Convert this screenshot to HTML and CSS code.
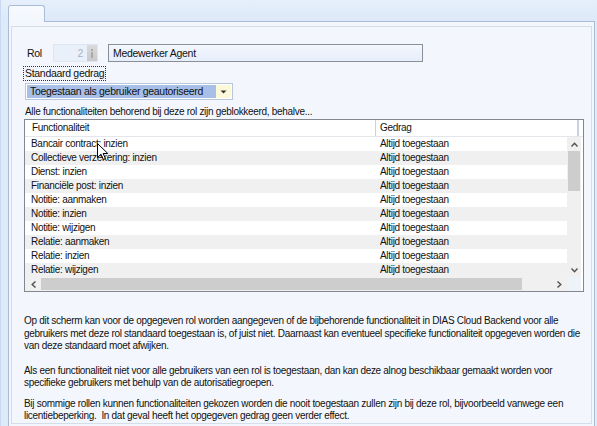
FILE: index.html
```html
<!DOCTYPE html>
<html>
<head>
<meta charset="utf-8">
<link rel="stylesheet" href="styles.css">
</head>
<body>
<div class="app">
  <div class="tabs"><div class="tab"></div></div>
  <div class="page">
    <div class="panel">
      <div class="rol-row">
        <span class="rol-label">Rol</span>
        <div class="spinner">
          <span class="spin-value">2</span>
          <span class="spin-btn"><span class="spin-mark"></span></span>
        </div>
        <div class="textbox">Medewerker Agent</div>
      </div>
      <div class="focus-label">Standaard gedrag</div>
      <div class="combo">
        <span class="combo-text">Toegestaan als gebruiker geautoriseerd</span>
        <span class="combo-btn"><svg width="7" height="4" viewBox="0 0 7 4"><path d="M0.5 0.5h6l-3 3z" fill="#333"/></svg></span>
      </div>
      <div class="caption">Alle functionaliteiten behorend bij deze rol zijn geblokkeerd, behalve...</div>
      <div class="grid">
        <div class="grid-head">
          <div class="hcell hcell-1">Functionaliteit</div>
          <div class="hcell hcell-2">Gedrag</div>
        </div>
        <div class="grid-body">
          <div class="rows">
            <div class="row"><span class="c1">Bancair contract: inzien</span><span class="c2">Altijd toegestaan</span></div>
            <div class="row alt"><span class="c1">Collectieve verzekering: inzien</span><span class="c2">Altijd toegestaan</span></div>
            <div class="row"><span class="c1">Dienst: inzien</span><span class="c2">Altijd toegestaan</span></div>
            <div class="row alt"><span class="c1">Financiële post: inzien</span><span class="c2">Altijd toegestaan</span></div>
            <div class="row"><span class="c1">Notitie: aanmaken</span><span class="c2">Altijd toegestaan</span></div>
            <div class="row alt"><span class="c1">Notitie: inzien</span><span class="c2">Altijd toegestaan</span></div>
            <div class="row"><span class="c1">Notitie: wijzigen</span><span class="c2">Altijd toegestaan</span></div>
            <div class="row alt"><span class="c1">Relatie: aanmaken</span><span class="c2">Altijd toegestaan</span></div>
            <div class="row"><span class="c1">Relatie: inzien</span><span class="c2">Altijd toegestaan</span></div>
            <div class="row alt"><span class="c1">Relatie: wijzigen</span><span class="c2">Altijd toegestaan</span></div>
          </div>
          <div class="vscroll">
            <span class="arrow"><svg width="7" height="5" viewBox="0 0 7 5"><path d="M0.5 4.5L3.5 1.2L6.5 4.5" fill="none" stroke="#505050" stroke-width="1.4"/></svg></span>
            <span class="vthumb"></span>
            <span class="vtrack"></span>
            <span class="arrow"><svg width="7" height="5" viewBox="0 0 7 5"><path d="M0.5 0.5L3.5 3.8L6.5 0.5" fill="none" stroke="#505050" stroke-width="1.4"/></svg></span>
          </div>
        </div>
        <div class="hscroll">
          <div class="htrackwrap">
            <span class="harrow"><svg width="5" height="7" viewBox="0 0 5 7"><path d="M4.5 0.5L1.2 3.5L4.5 6.5" fill="none" stroke="#505050" stroke-width="1.4"/></svg></span>
            <span class="hthumb"></span>
            <span class="htrack"></span>
            <span class="harrow"><svg width="5" height="7" viewBox="0 0 5 7"><path d="M0.5 0.5L3.8 3.5L0.5 6.5" fill="none" stroke="#505050" stroke-width="1.4"/></svg></span>
          </div>
          <span class="corner"></span>
        </div>
        <svg class="cursor" width="12" height="18" viewBox="0 0 12 18"><path d="M0.5 0.5V14.5L4 11.2L6.3 16.5L8.4 15.6L6.2 10.5H10.8Z" fill="#fff" stroke="#000" stroke-width="1"/></svg>
      </div>
      <div class="help">
        <p class="p1">Op dit scherm kan voor de opgegeven rol worden aangegeven of de bijbehorende functionaliteit in DIAS Cloud Backend voor alle gebruikers met deze rol standaard toegestaan is, of juist niet. Daarnaast kan eventueel specifieke functionaliteit opgegeven worden die van deze standaard moet afwijken.</p>
        <p class="p2">Als een functionaliteit niet voor alle gebruikers van een rol is toegestaan, dan kan deze alnog beschikbaar gemaakt worden voor specifieke gebruikers met behulp van de autorisatiegroepen.</p>
        <p class="p3">Bij sommige rollen kunnen functionaliteiten gekozen worden die nooit toegestaan zullen zijn bij deze rol, bijvoorbeeld vanwege een licentiebeperking.&nbsp; In dat geval heeft het opgegeven gedrag geen verder effect.</p>
      </div>
    </div>
  </div>
</div>
</body>
</html>
```

FILE: styles.css
```css
* { box-sizing: border-box; }
html, body {
  margin: 0;
  padding: 0;
  width: 597px;
  height: 426px;
  overflow: hidden;
}
body {
  background: #dfeaf9;
  font-family: "Liberation Sans", Arial, sans-serif;
  font-size: 10px;
  letter-spacing: -0.3px;
  color: #111;
}
.app {
  display: flex;
  flex-direction: column;
  height: 426px;
  border-left: 1px solid #c8daf1;
}
.tabs {
  flex-shrink: 0;
  height: 21px;
  display: flex;
  align-items: flex-end;
  padding-left: 7px;
  background: linear-gradient(#e6effb, #dde9f9);
}
.tab {
  width: 37px;
  height: 17px;
  margin-bottom: -1px;
  border: 1px solid #a9bdd6;
  border-bottom: none;
  border-radius: 3px 3px 0 0;
  background: linear-gradient(#f7fafe, #f2f7fd);
  position: relative;
  z-index: 1;
}
.page {
  margin-left: 7px;
  width: 587px;
  flex: 1 0 auto;
  border: 1px solid #a9bdd6;
  border-bottom: none;
  background: #f3f7fd;
  padding: 4px 2px 2px 2px;
  display: flex;
}
.panel {
  flex: 1;
  border: 1px solid #d4deea;
  background: #f3f7fd;
  padding: 17px 0 0 12px;
  display: flex;
  flex-direction: column;
  align-items: flex-start;
}
.panel > * { flex-shrink: 0; }
.rol-row {
  display: flex;
  align-items: center;
  height: 18px;
}
.rol-label {
  width: 29px;
  padding-left: 3px;
  font-size: 10.5px;
}
.spinner {
  width: 45px;
  height: 18px;
  display: flex;
  border: 1px solid #dde6f1;
  background: #e9f0fa;
}
.spin-value {
  flex: 1;
  text-align: right;
  padding-right: 4px;
  color: #a7b3c3;
  font-size: 10.5px;
  line-height: 16px;
}
.spin-btn {
  width: 10px;
  background: linear-gradient(#dadada, #c9c9c9);
  display: flex;
  justify-content: center;
  align-items: center;
}
.spin-mark {
  width: 2px;
  height: 9px;
  background: linear-gradient(#aaa 0 2px, transparent 2px 3px, #aaa 3px);
}
.textbox {
  margin-left: 10px;
  width: 315px;
  height: 18px;
  border: 1px solid #8a8f96;
  background: linear-gradient(#f3f7fd, #e6eefb);
  padding-left: 4px;
  line-height: 16px;
  font-size: 10.5px;
}
.focus-label {
  margin-top: 4px;
  margin-left: -1px;
  height: 15px;
  padding: 0 1px;
  border: 1px dotted #333;
  line-height: 13px;
  font-size: 10.5px;
}
.combo {
  margin-top: 2px;
  margin-left: 1px;
  width: 208px;
  height: 17px;
  border: 1px solid #b7c7dc;
  background: #fff;
  display: flex;
  padding: 1px;
}
.combo-text {
  flex: 1;
  background: #a8c0e8;
  padding-left: 3px;
  line-height: 13px;
  font-size: 10.5px;
}
.combo-btn {
  width: 15px;
  background: #fcf8da;
  display: flex;
  justify-content: center;
  align-items: center;
}
.caption {
  margin-top: 5px;
  height: 13px;
  line-height: 13px;
  margin-left: 1px;
}
.grid {
  position: relative;
  margin-top: 1px;
  width: 560px;
  border: 1px solid #828790;
  background: #fff;
}
.grid-head {
  display: flex;
  height: 17px;
  border-bottom: 1px solid #e3e6ea;
}
.hcell {
  line-height: 16px;
  padding-left: 6px;
}
.hcell-1 {
  width: 350px;
  padding-left: 7px;
}
.hcell-2 {
  width: 204px;
  border-left: 1px solid #c6d2e2;
  border-right: 2px solid #c6d2e2;
  padding-left: 4px;
}
.grid-body {
  display: flex;
  height: 140px;
}
.rows {
  width: 542px;
}
.row {
  display: flex;
  height: 14px;
  line-height: 14px;
  background: #fff;
}
.row.alt { background: #f0f0f0; }
.c1 {
  width: 355px;
  padding-left: 6px;
}
.c2 { flex: 1; }
.vscroll {
  width: 14px;
  background: #f0f0f0;
  display: flex;
  flex-direction: column;
}
.arrow {
  height: 14px;
  display: flex;
  justify-content: center;
  align-items: center;
}
.vthumb {
  height: 40px;
  background: #cdcdcd;
  margin: 0 1px;
}
.vtrack { flex: 1; }
.hscroll {
  display: flex;
  height: 14px;
}
.htrackwrap {
  width: 542px;
  display: flex;
  background: #f0f0f0;
}
.harrow {
  width: 16px;
  display: flex;
  justify-content: center;
  align-items: center;
}
.hthumb {
  width: 481px;
  background: #cdcdcd;
  margin: 1px 0;
}
.htrack { flex: 1; }
.corner {
  width: 14px;
  background: #eef3fa;
}
.cursor {
  position: absolute;
  left: 72px;
  top: 23px;
}
.help {
  margin-top: 23px;
  width: 560px;
  line-height: 12.5px;
}
.help p { margin: 0; }
.help .p1 { margin-bottom: 12px; }
.help .p2 { margin-bottom: 8px; }
```
